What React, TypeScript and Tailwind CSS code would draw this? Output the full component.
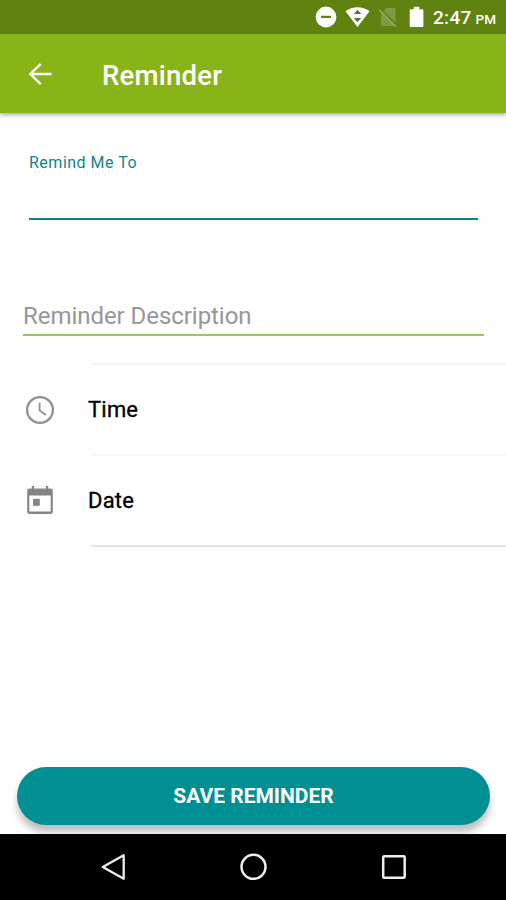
import type { ReactNode } from "react";

function StatusBar() {
  return (
    <div className="flex h-[34px] items-center bg-[#5f8210] pl-[315px] text-white">
      <svg width="22" height="22" viewBox="0 0 22 22">
        <circle cx="11" cy="11" r="10.4" fill="#fff" />
        <rect x="6" y="9.8" width="10" height="2.2" fill="#5f8210" />
      </svg>
      <svg className="ml-2" width="26" height="22" viewBox="0 0 26 22">
        <path d="M0.5 5.2C7.5 -0.2 17.5 -0.2 24.5 5.2L12.5 21Z" fill="#fff" />
        <path d="M12.5 3.8L16.2 8H8.8ZM12.5 16.2L8.8 12H16.2Z" fill="#5d6b49" />
      </svg>
      <svg className="ml-2" width="20" height="22" viewBox="0 0 20 22">
        <path d="M7.5 2H15a1.500 1.500 0 0 1 1.500 1.500V18.500A1.500 1.500 0 0 1 15 20H3.500a1.500 1.500 0 0 1-1.500-1.500V7.500Z" fill="#809a43" />
        <path d="M1.200 3.200L17.800 20" stroke="#5f8210" strokeWidth="2.600" />
        <path d="M0.200 3.800L17 20.800" stroke="#93aa5c" strokeWidth="1.700" />
      </svg>
      <svg className="ml-2.5" width="16" height="22" viewBox="0 0 16 22">
        <path d="M4.8 0.8h5.5v2.4h2.9a1.2 1.2 0 0 1 1.2 1.2v15.4a1.2 1.2 0 0 1-1.2 1.2H1.9a1.2 1.2 0 0 1-1.2-1.2V4.4a1.2 1.2 0 0 1 1.2-1.2h2.9z" fill="#fff" />
      </svg>
      <div className="ml-2 flex items-baseline gap-1 pt-0.5 font-medium whitespace-nowrap">
        <span className="text-[19px] leading-8 tracking-[0.3px]">2:47</span>
        <span className="text-[13.5px]">PM</span>
      </div>
    </div>
  );
}

function AppBar() {
  return (
    <header className="relative z-10 flex h-[79px] items-center bg-[#89b417] pl-7 text-white shadow-[0_2px_4px_rgba(40,50,70,0.4)]">
      <svg width="24" height="24" viewBox="0 0 24 24" fill="none" stroke="#fff" strokeWidth="2.4">
        <path d="M23.5 12H2.5M12.7 1.8L2.3 12L12.7 22.2" />
      </svg>
      <h1 className="ml-[50px] pt-1 text-[27.5px] font-medium tracking-[0.25px]">Reminder</h1>
    </header>
  );
}

function ClockIcon() {
  return (
    <svg width="30" height="30" viewBox="0 0 30 30" fill="none" stroke="#919191">
      <circle cx="15" cy="15" r="12.9" strokeWidth="2.3" />
      <path d="M14.6 7.8V15.5L21 20" strokeWidth="1.8" />
    </svg>
  );
}

function CalendarIcon() {
  return (
    <svg width="30" height="30" viewBox="0 0 30 30">
      <path d="M4.5 2.5h21a2.3 2.3 0 0 1 2.3 2.3v20.9a2.3 2.3 0 0 1-2.3 2.3h-21a2.3 2.3 0 0 1-2.3-2.3V4.8a2.3 2.3 0 0 1 2.3-2.3zM4.3 9.5v16h21.4v-16z" fill="#858585" fillRule="evenodd" />
      <path d="M6.8 0h2.2v4H6.8zM21 0h2.2v4H21z" fill="#858585" />
      <rect x="8" y="12.8" width="6.8" height="7" fill="#858585" />
    </svg>
  );
}

function SettingRow({ icon, label }: { icon: ReactNode; label: string }) {
  return (
    <div className="flex h-[89px] items-center pl-[25px]">
      {icon}
      <span className="ml-[33px] text-[22px] tracking-[0.2px] text-black [-webkit-text-stroke:0.3px_black]">{label}</span>
    </div>
  );
}

function NavBar() {
  return (
    <nav className="relative z-10 flex h-[66px] items-center justify-between bg-black pr-[98px] pl-[99px]">
      <svg width="28" height="30" viewBox="0 0 28 30" fill="none" stroke="#eee" strokeWidth="2.3" strokeLinejoin="round">
        <path d="M24.7 3.2V26.8L3.8 15Z" />
      </svg>
      <svg width="28" height="28" viewBox="0 0 28 28" fill="none" stroke="#eee" strokeWidth="2.5">
        <circle cx="13.5" cy="13.800" r="12" />
      </svg>
      <svg width="28" height="28" viewBox="0 0 28 28" fill="none" stroke="#eee" strokeWidth="2.5">
        <rect x="3.2" y="3.3" width="21.5" height="21.5" rx="1" />
      </svg>
    </nav>
  );
}

export default function App() {
  return (
    <div className="flex h-[900px] w-[506px] flex-col overflow-hidden bg-[#fefefe] font-[Roboto,sans-serif]">
      <StatusBar />
      <AppBar />
      <main className="flex flex-1 flex-col">
        <div className="mr-7 ml-[29px] h-[107px] border-b-2 border-[#128087] pt-[38px] text-[16px] leading-6 tracking-[0.5px] text-[#168287]">
          Remind Me To
        </div>
        <div className="mr-[22px] ml-[23px] mt-[80px] h-9 border-b-2 border-[#9bc268] text-[24px] leading-8 tracking-[-0.05px] text-[#979797]">
          Reminder Description
        </div>
        <div className="mt-[27px]">
          <div className="ml-[91px] h-0.5 bg-[#f7f7f7]" />
          <SettingRow icon={<ClockIcon />} label="Time" />
          <div className="ml-[91px] h-0.5 bg-[#f7f7f7]" />
          <SettingRow icon={<CalendarIcon />} label="Date" />
          <div className="ml-[91px] h-0.5 bg-[#e3e3e3]" />
        </div>
        <button className="mr-4 ml-[17px] mt-auto mb-[9px] h-[58px] shrink-0 rounded-full bg-[#009094] pt-0.5 text-[21px] font-bold text-white shadow-[0_7px_7px_rgba(0,0,0,0.25)]">
          SAVE REMINDER
        </button>
      </main>
      <NavBar />
    </div>
  );
}
